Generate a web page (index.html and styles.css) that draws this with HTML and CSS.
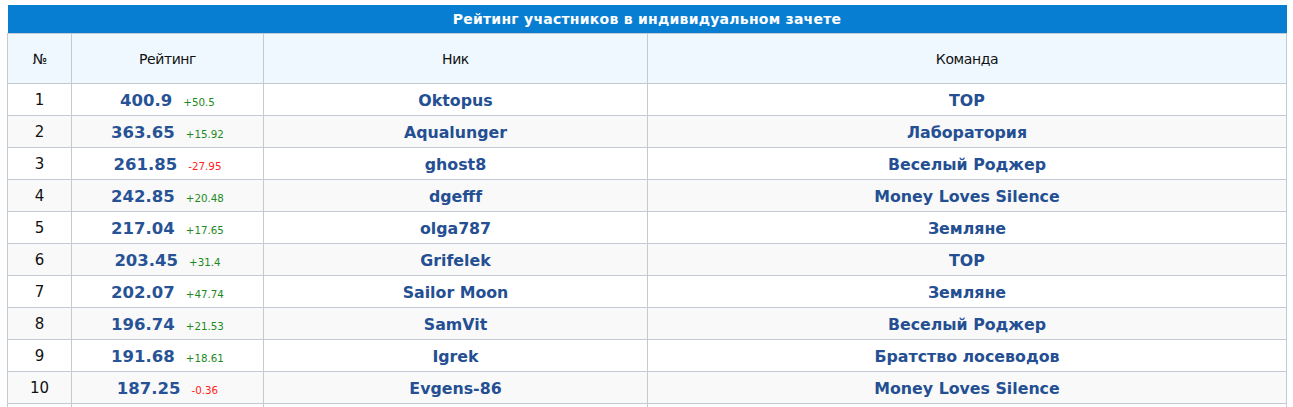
FILE: index.html
```html
<!DOCTYPE html>
<html lang="ru">
<head>
<meta charset="utf-8">
<link rel="stylesheet" href="styles.css">
</head>
<body>
<table class="rating">
  <colgroup>
    <col class="c-num">
    <col class="c-rate">
    <col class="c-nick">
    <col class="c-team">
  </colgroup>
  <thead>
    <tr><th class="title" colspan="4">Рейтинг участников в индивидуальном зачете</th></tr>
    <tr class="head"><th>№</th><th>Рейтинг</th><th>Ник</th><th>Команда</th></tr>
  </thead>
  <tbody>
    <tr><td class="num">1</td><td class="rate"><b>400.9</b><span class="up">+50.5</span></td><td class="nick">Oktopus</td><td class="team">TOP</td></tr>
    <tr><td class="num">2</td><td class="rate"><b>363.65</b><span class="up">+15.92</span></td><td class="nick">Aqualunger</td><td class="team">Лаборатория</td></tr>
    <tr><td class="num">3</td><td class="rate"><b>261.85</b><span class="down">-27.95</span></td><td class="nick">ghost8</td><td class="team">Веселый Роджер</td></tr>
    <tr><td class="num">4</td><td class="rate"><b>242.85</b><span class="up">+20.48</span></td><td class="nick">dgefff</td><td class="team">Money Loves Silence</td></tr>
    <tr><td class="num">5</td><td class="rate"><b>217.04</b><span class="up">+17.65</span></td><td class="nick">olga787</td><td class="team">Земляне</td></tr>
    <tr><td class="num">6</td><td class="rate"><b>203.45</b><span class="up">+31.4</span></td><td class="nick">Grifelek</td><td class="team">TOP</td></tr>
    <tr><td class="num">7</td><td class="rate"><b>202.07</b><span class="up">+47.74</span></td><td class="nick">Sailor Moon</td><td class="team">Земляне</td></tr>
    <tr><td class="num">8</td><td class="rate"><b>196.74</b><span class="up">+21.53</span></td><td class="nick">SamVit</td><td class="team">Веселый Роджер</td></tr>
    <tr><td class="num">9</td><td class="rate"><b>191.68</b><span class="up">+18.61</span></td><td class="nick">Igrek</td><td class="team">Братство лосеводов</td></tr>
    <tr><td class="num">10</td><td class="rate"><b>187.25</b><span class="down">-0.36</span></td><td class="nick">Evgens-86</td><td class="team">Money Loves Silence</td></tr>
    <tr><td class="num"></td><td class="rate"></td><td class="nick"></td><td class="team"></td></tr>
  </tbody>
</table>
</body>
</html>
```
FILE: styles.css
```css
html, body {
  margin: 0;
  padding: 0;
  background: #ffffff;
}
body {
  padding: 5px 7px 0 7px;
  font-family: "DejaVu Sans", Verdana, sans-serif;
  overflow: hidden;
}
.rating {
  width: 1280px;
  border-collapse: collapse;
  table-layout: fixed;
}
.c-num { width: 64px; }
.c-rate { width: 192px; }
.c-nick { width: 384px; }
.c-team { width: auto; }

.rating th.title {
  background: #087ed3;
  color: #ffffff;
  font-weight: bold;
  font-size: 14px;
  height: 28px;
  padding: 0;
  border: none;
  text-align: center;
  letter-spacing: 0.25px;
}
.head th {
  background: #eef8fe;
  color: #111111;
  font-weight: normal;
  font-size: 14px;
  height: 49px;
  padding: 0;
  border: 1px solid #c3cad4;
  letter-spacing: -0.4px;
}
.rating td {
  height: 30px;
  padding: 1px 0 0 0;
  border: 1px solid #c3cad4;
  text-align: center;
  vertical-align: middle;
}
.rating tbody tr:nth-child(even) td {
  background: #f9f9f9;
}
.num {
  font-size: 15px;
  color: #111111;
}
.rate b {
  font-size: 16.5px;
  color: #275396;
  font-weight: bold;
}
.rate span {
  font-size: 10.3px;
  margin-left: 11px;
}
.up { color: #1c8a1c; }
.down { color: #ff1c1c; }
.nick, .team {
  font-size: 15.8px;
  font-weight: bold;
  color: #244f92;
}
```
